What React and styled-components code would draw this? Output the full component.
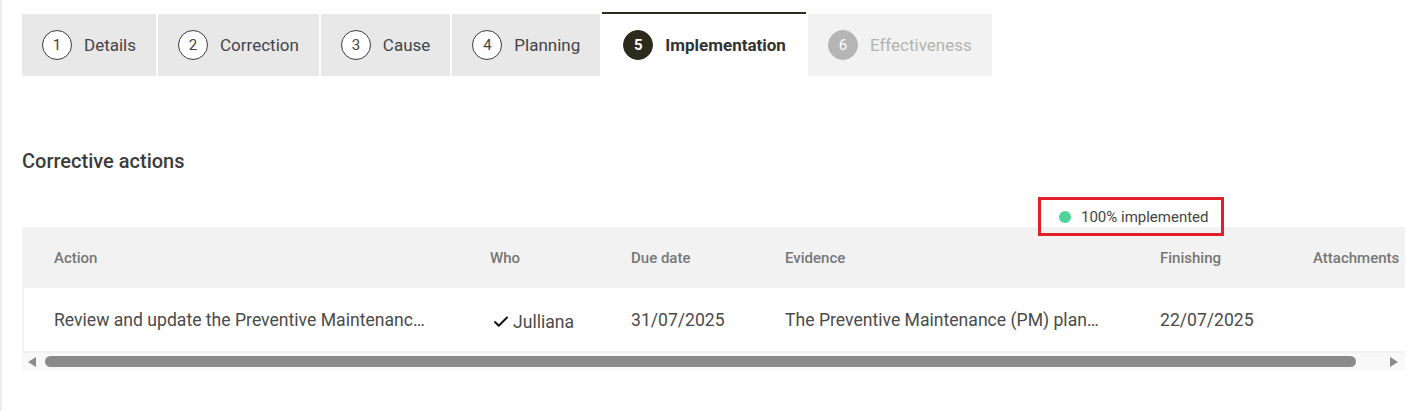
import styled, { createGlobalStyle } from "styled-components";
import { Check } from "lucide-react";

const GlobalStyle = createGlobalStyle`
  html, body {
    margin: 0;
    padding: 0;
    background: #ffffff;
    font-family: Roboto, "Liberation Sans", Arial, sans-serif;
  }
  * {
    box-sizing: border-box;
  }
`;

const Page = styled.div`
  min-height: 411px;
  border-left: 2px solid #ececec;
  padding: 12px 12px 0 20px;
`;

const Tabs = styled.div`
  display: flex;
  gap: 2px;
  align-items: stretch;
`;

const Tab = styled.div`
  height: 64px;
  display: flex;
  align-items: center;
  gap: 12px;
  padding: 0 20px 0 ${(p) => (p.$active ? "21px" : "20px")};
  border-top: 2px solid ${(p) => (p.$active ? "#2b2a1c" : "transparent")};
  background: ${(p) =>
    p.$active ? "#ffffff" : p.$disabled ? "#f2f2f2" : "#e8e8e8"};
  background-clip: padding-box;
  font-size: 17px;
  font-weight: ${(p) => (p.$active ? 700 : 400)};
  color: ${(p) => (p.$disabled ? "#b3b3b3" : p.$active ? "#333333" : "#42454b")};
  white-space: nowrap;
`;

const StepCircle = styled.span`
  width: 30px;
  height: 30px;
  border-radius: 50%;
  display: flex;
  align-items: center;
  justify-content: center;
  font-size: 15px;
  font-weight: ${(p) => (p.$active ? 700 : 400)};
  border: 1px solid
    ${(p) => (p.$active ? "#2b2a1c" : p.$disabled ? "#b5b5b5" : "#3a3a3a")};
  background: ${(p) =>
    p.$active ? "#2b2a1c" : p.$disabled ? "#b5b5b5" : "#ffffff"};
  color: ${(p) => (p.$active || p.$disabled ? "#ffffff" : "#444444")};
`;

const Heading = styled.h2`
  margin: 73px 0 0 0;
  font-size: 20px;
  line-height: 24px;
  font-weight: 500;
  color: #3c3c3c;
`;

const StatusRow = styled.div`
  height: 30px;
  margin-top: 24px;
  display: flex;
  justify-content: flex-end;
  align-items: flex-start;
  padding-right: 181px;
`;

const StatusBox = styled.div`
  position: relative;
  z-index: 1;
  height: 39px;
  width: 186px;
  border: 3px solid #e3202a;
  display: flex;
  align-items: center;
  gap: 10px;
  padding-left: 18px;
  font-size: 15px;
  color: #444444;
`;

const Dot = styled.span`
  width: 12px;
  height: 12px;
  border-radius: 50%;
  background: #4fd39a;
`;

const TableFrame = styled.div`
  width: 1383px;
  background: #f2f2f2;
  overflow: hidden;
`;

const Grid = styled.div`
  display: grid;
  grid-template-columns: 436px 141px 154px 375px 153px 160px;
  width: 1419px;
`;

const HeaderRow = styled(Grid)`
  height: 61px;
  align-items: center;
  background: #f2f2f2;
`;

const HeadCell = styled.div`
  padding: 0 32px;
  font-size: 15px;
  font-weight: 500;
  color: #777777;
  white-space: nowrap;
`;

const BodyRow = styled(Grid)`
  height: 63px;
  margin-bottom: 2px;
  align-items: center;
  background: #ffffff;
  box-shadow: inset 2px 0 0 #f2f2f2;
`;

const Cell = styled.div`
  padding: 0 ${(p) => p.$trim ?? 6}px 0 32px;
  font-size: 17.6px;
  color: #4a4a4a;
  white-space: nowrap;
  overflow: hidden;
  text-overflow: ellipsis;
`;

const WhoCell = styled(Cell)`
  display: flex;
  align-items: center;
  gap: 3px;
  padding-top: 5px;
  padding-left: 34px;
  overflow: visible;
`;

const ScrollTrack = styled.div`
  height: 17px;
  display: flex;
  align-items: center;
  gap: 9px;
  padding: 0 7px 0 6px;
  background: #f8f8f8;
`;

const Arrow = styled.span`
  width: 0;
  height: 0;
  border-top: 5px solid transparent;
  border-bottom: 5px solid transparent;
  ${(p) =>
    p.$dir === "left"
      ? "border-right: 8px solid #8a8a8a;"
      : "border-left: 8px solid #8a8a8a;"}
`;

const ThumbArea = styled.div`
  flex: 1;
  padding-right: 25px;
`;

const Thumb = styled.div`
  height: 11px;
  border-radius: 6px;
  background: #8a8a8a;
`;

const steps = [
  { n: 1, label: "Details" },
  { n: 2, label: "Correction" },
  { n: 3, label: "Cause" },
  { n: 4, label: "Planning" },
  { n: 5, label: "Implementation", active: true },
  { n: 6, label: "Effectiveness", disabled: true },
];

const columns = ["Action", "Who", "Due date", "Evidence", "Finishing", "Attachments"];

const actions = [
  {
    action:
      "Review and update the Preventive Maintenance (PM) plan for the filling line",
    who: "Julliana",
    due: "31/07/2025",
    evidence:
      "The Preventive Maintenance (PM) plan was reviewed and updated",
    finishing: "22/07/2025",
  },
];

export default function App() {
  return (
    <Page>
      <GlobalStyle />
      <Tabs>
        {steps.map((s) => (
          <Tab key={s.n} $active={s.active} $disabled={s.disabled}>
            <StepCircle $active={s.active} $disabled={s.disabled}>
              {s.n}
            </StepCircle>
            {s.label}
          </Tab>
        ))}
      </Tabs>

      <Heading>Corrective actions</Heading>

      <StatusRow>
        <StatusBox>
          <Dot />
          100% implemented
        </StatusBox>
      </StatusRow>

      <TableFrame>
        <HeaderRow>
          {columns.map((c) => (
            <HeadCell key={c}>{c}</HeadCell>
          ))}
        </HeaderRow>
        {actions.map((a, i) => (
          <BodyRow key={i}>
            <Cell $trim={32}>{a.action}</Cell>
            <WhoCell>
              <Check size={18} strokeWidth={2.6} color="#111111" />
              {a.who}
            </WhoCell>
            <Cell>{a.due}</Cell>
            <Cell $trim={26}>{a.evidence}</Cell>
            <Cell>{a.finishing}</Cell>
            <Cell></Cell>
          </BodyRow>
        ))}
        <ScrollTrack>
          <Arrow $dir="left" />
          <ThumbArea>
            <Thumb />
          </ThumbArea>
          <Arrow $dir="right" />
        </ScrollTrack>
      </TableFrame>
    </Page>
  );
}
